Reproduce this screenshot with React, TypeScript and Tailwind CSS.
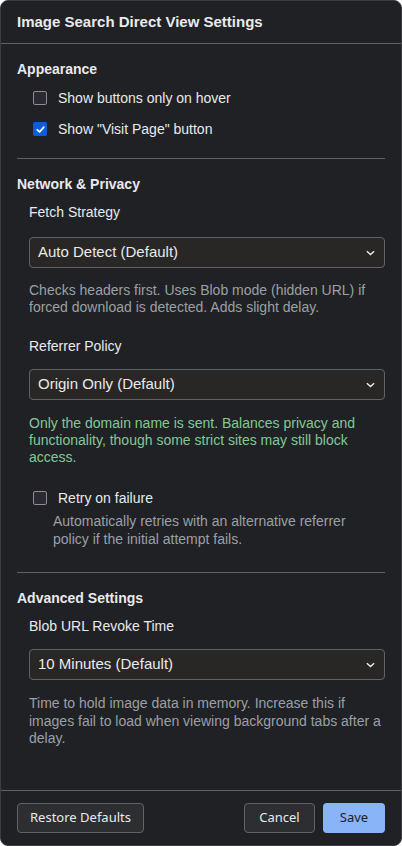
import { useState } from 'react'

const body = { fontFamily: '"Liberation Sans", Arial, sans-serif' }
const ui = { fontFamily: '"Noto Sans", "Open Sans", sans-serif' }

function Check({ checked, onChange }: { checked: boolean; onChange: () => void }) {
  return (
    <button
      type="button"
      onClick={onChange}
      className={
        checked
          ? 'flex h-[14px] w-[14px] shrink-0 items-center justify-center rounded-[2px] bg-[#0b5ed7]'
          : 'h-[14px] w-[14px] shrink-0 rounded-[2px] border border-[#8d8d93] bg-[#2b2a33]'
      }
    >
      {checked && (
        <svg viewBox="0 0 12 12" className="h-[11px] w-[11px]">
          <path d="M2.5 6.3 L5 8.7 L9.6 3.4" fill="none" stroke="white" strokeWidth="1.9" strokeLinecap="round" strokeLinejoin="round" />
        </svg>
      )}
    </button>
  )
}

function Select({ value }: { value: string }) {
  return (
    <div className="flex h-[31px] w-full items-center justify-between rounded-[4px] border border-[#5f6368] bg-[#292725] pl-2 pr-[9px] text-[15px] text-[#e8eaed]">
      <span>{value}</span>
      <svg viewBox="0 0 10 6" className="h-[6px] w-[9px]">
        <path d="M1 1 L5 4.8 L9 1" fill="none" stroke="#e8eaed" strokeWidth="1.6" />
      </svg>
    </div>
  )
}

export default function App() {
  const [hoverOnly, setHoverOnly] = useState(false)
  const [visitPage, setVisitPage] = useState(true)
  const [retry, setRetry] = useState(false)

  return (
    <div style={body} className="flex h-[846px] w-[402px] flex-col overflow-hidden rounded-lg border border-[#3c3d41] bg-[#202124] text-[#e8eaed]">
      <div className="flex h-[43px] shrink-0 items-center border-b border-[#5f6368] px-4">
        <h1 className="text-[15px] font-bold">Image Search Direct View Settings</h1>
      </div>

      <div className="flex-1 px-4 pt-[15px]">
        <h2 className="text-[14px] font-bold leading-5">Appearance</h2>
        <div className="mt-[9px] flex h-5 items-center gap-[11px] pl-4 text-[14px]">
          <Check checked={hoverOnly} onChange={() => setHoverOnly(v => !v)} />
          <span>Show buttons only on hover</span>
        </div>
        <div className="mt-[11px] flex h-5 items-center gap-[11px] pl-4 text-[14px]">
          <Check checked={visitPage} onChange={() => setVisitPage(v => !v)} />
          <span>Show "Visit Page" button</span>
        </div>

        <div className="mt-[19px] h-px bg-[#5f6368]" />

        <h2 className="mt-[15px] text-[14px] font-bold leading-5">Network &amp; Privacy</h2>
        <div className="pl-3">
          <div className="mt-2 text-[14px] leading-5">Fetch Strategy</div>
          <div className="mt-[15px]">
            <Select value="Auto Detect (Default)" />
          </div>
          <p className="mt-[14px] text-[14px] leading-[17px] text-[#9aa0a6]">
            Checks headers first. Uses Blob mode (hidden URL) if forced download is detected. Adds slight delay.
          </p>

          <div className="mt-[20px] text-[14px] leading-5">Referrer Policy</div>
          <div className="mt-[13px]">
            <Select value="Origin Only (Default)" />
          </div>
          <p className="mt-[15px] text-[14px] leading-[17px] text-[#81c995]">
            Only the domain name is sent. Balances privacy and functionality, though some strict sites may still block access.
          </p>

          <div className="mt-[22px] flex h-5 items-center gap-[11px] pl-1 text-[14px]">
            <Check checked={retry} onChange={() => setRetry(v => !v)} />
            <span>Retry on failure</span>
          </div>
          <p className="mt-[4px] pl-6 text-[14px] leading-[18px] text-[#9aa0a6]">
            Automatically retries with an alternative referrer policy if the initial attempt fails.
          </p>
        </div>

        <div className="mt-[24px] h-px bg-[#5f6368]" />

        <h2 className="mt-[15px] text-[14px] font-bold leading-5">Advanced Settings</h2>
        <div className="pl-3">
          <div className="mt-2 text-[14px] leading-5">Blob URL Revoke Time</div>
          <div className="mt-[13px]">
            <Select value="10 Minutes (Default)" />
          </div>
          <p className="mt-[15px] text-[14px] leading-[17.5px] text-[#9aa0a6]">
            Time to hold image data in memory. Increase this if images fail to load when viewing background tabs after a delay.
          </p>
        </div>
      </div>

      <div style={ui} className="flex shrink-0 items-center justify-between border-t border-[#5f6368] px-4 pb-3 pt-3 text-[13px]">
        <button className="h-[30px] w-[127px] rounded-[4px] border border-[#5f6368] bg-[#2d2e31] text-[#e8eaed]">
          Restore Defaults
        </button>
        <div className="flex gap-2">
          <button className="h-[30px] w-[71px] rounded-[4px] border border-[#5f6368] bg-[#2d2e31] text-[#e8eaed]">
            Cancel
          </button>
          <button className="h-[30px] w-[62px] rounded-[4px] bg-[#8ab4f8] text-[#202124]">
            Save
          </button>
        </div>
      </div>
    </div>
  )
}
